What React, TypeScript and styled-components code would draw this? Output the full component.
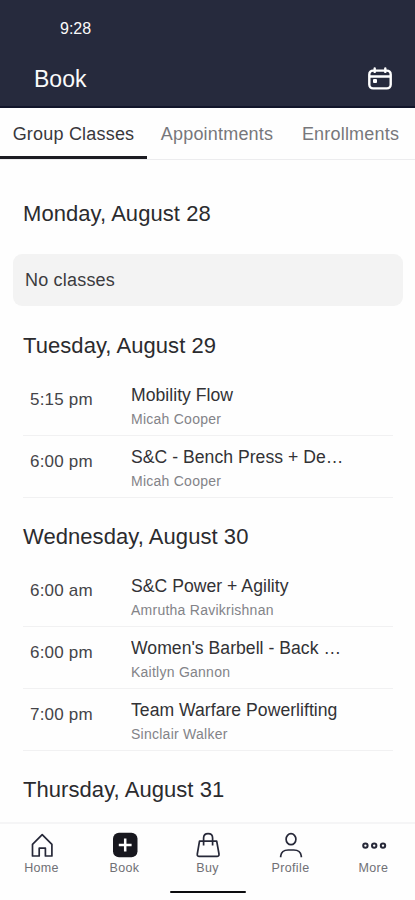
import React from "react";
import styled, { createGlobalStyle } from "styled-components";

const GlobalStyle = createGlobalStyle`
  * { box-sizing: border-box; }
  body {
    margin: 0;
    background: #fefefe;
    color: #27272a;
    font-family: "Liberation Sans", Arial, sans-serif;
  }
`;

const Screen = styled.div`
  width: 415px;
  height: 900px;
  display: flex;
  flex-direction: column;
  overflow: hidden;
  background: #fefefe;
`;

const Header = styled.header`
  flex: none;
  height: 108px;
  background: #262a3d;
  border-bottom: 2px solid #11152a;
  color: #fafafa;
`;

const StatusBar = styled.div`
  height: 56px;
  padding-left: 60px;
  font-size: 16px;
  line-height: 57px;
`;

const TitleBar = styled.div`
  height: 46px;
  padding: 0 23px 0 34px;
  display: flex;
  align-items: center;
  justify-content: space-between;
`;

const Title = styled.h1`
  margin: 0;
  font-size: 23px;
  font-weight: 400;
  line-height: 46px;
`;

const Tabs = styled.nav`
  flex: none;
  height: 52px;
  display: flex;
  border-bottom: 1px solid #ececee;
`;

const Tab = styled.div<{ $active?: boolean; $width: number }>`
  flex: none;
  width: ${(p) => p.$width}px;
  height: 51px;
  text-align: center;
  font-size: 18px;
  line-height: 52px;
  letter-spacing: 0.2px;
  white-space: nowrap;
  color: ${(p) => (p.$active ? "#38383c" : "#77777b")};
  border-bottom: ${(p) => (p.$active ? "3px solid #1c1c22" : "none")};
`;

const Schedule = styled.main`
  flex: 1;
  min-height: 0;
  overflow: hidden;
  padding: 30px 12px 0 13px;
`;

const Day = styled.section<{ $gap: number }>`
  margin-bottom: ${(p) => p.$gap}px;
`;

const DayTitle = styled.h2`
  margin: 0 0 4px 10px;
  font-size: 22px;
  line-height: 48px;
  letter-spacing: 0.06px;
  font-weight: 400;
  color: #2b2b2e;
`;

const EmptyCard = styled.div`
  height: 52px;
  margin-top: 16px;
  padding-left: 12px;
  border-radius: 9px;
  background: #f3f3f3;
  font-size: 18px;
  line-height: 52px;
  letter-spacing: 0.2px;
  color: #3b3b3e;
`;

const ClassRow = styled.div`
  height: 62px;
  margin: 0 10px;
  padding: 8px 0 0 7px;
  display: grid;
  grid-template-columns: 101px 214px;
  border-bottom: 1px solid #f1f1f2;
`;

const Time = styled.div`
  padding-top: 6px;
  font-size: 17px;
  line-height: 24px;
  letter-spacing: 0.2px;
  color: #444448;
`;

const ClassName = styled.div`
  height: 27px;
  overflow: hidden;
  white-space: nowrap;
  font-size: 17.6px;
  line-height: 26px;
  letter-spacing: 0.03px;
  color: #323235;
`;

const Coach = styled.div`
  font-size: 14px;
  line-height: 21px;
  letter-spacing: 0.25px;
  color: #838388;
`;

const BottomBar = styled.footer`
  flex: none;
  height: 78px;
  border-top: 2px solid #f5f5f6;
  display: flex;
  flex-direction: column;
  align-items: center;
`;

const NavItems = styled.div`
  width: 100%;
  height: 67px;
  display: grid;
  grid-template-columns: repeat(5, 1fr);
`;

const NavItem = styled.div`
  display: flex;
  flex-direction: column;
  align-items: center;
  padding-top: 8px;
`;

const NavLabel = styled.div`
  font-size: 12.5px;
  line-height: 20px;
  letter-spacing: 0.35px;
  color: #707075;
`;

const HomeIndicator = styled.div`
  width: 76px;
  height: 2px;
  border-radius: 1px;
  background: #0c0c0e;
`;

const Icon = styled.svg`
  display: block;
  flex: none;
  fill: none;
  stroke: #262838;
  stroke-width: 1.7;
  stroke-linejoin: round;
`;

const CalendarIcon = () => (
  <Icon width="24" height="24" viewBox="0 0 24 24">
    <g stroke="#fff" strokeWidth="2.4" strokeLinecap="round">
      <rect x="1.3" y="3.6" width="21.4" height="17.8" rx="3.8" />
      <path d="M6.7 1.5v3.4M17.3 1.5v3.4M2 9.5h20" />
    </g>
    <rect x="5" y="12" width="4" height="4" rx="1" fill="#fff" stroke="none" />
  </Icon>
);

const HomeIcon = () => (
  <Icon width="26" height="26" viewBox="0 0 26 26">
    <path d="M3.5 24V12.400L13.200 2.600 22.900 12.400V24H16.400V16.200H10.200V24Z" />
  </Icon>
);

const BookIcon = () => (
  <Icon width="26" height="26" viewBox="0 0 26 26">
    <rect x="1" y="0.7" width="24.5" height="24.5" rx="6" fill="#17171e" stroke="none" />
    <path d="M13.2 6.600v12.800M6.800 13h12.800" stroke="#fff" strokeWidth="2.5" />
  </Icon>
);

const BuyIcon = () => (
  <Icon width="26" height="26" viewBox="0 0 26 26">
    <path d="M4.500 9.200h17.200L24 22q.2 2.400-2 2.400H4.200Q2 24.400 2.300 22Z" />
    <path d="M8.600 13.500V6q0-4.300 4.500-4.300T17.600 6v7.500" />
  </Icon>
);

const ProfileIcon = () => (
  <Icon width="26" height="26" viewBox="0 0 26 26">
    <ellipse cx="13" cy="7.2" rx="4.9" ry="5.5" />
    <path d="M2.700 25.300v-1.300q.8-6 7.500-6h5.600q6.700 0 7.500 6v1.300" />
  </Icon>
);

const MoreIcon = () => (
  <Icon width="26" height="26" viewBox="0 0 26 26">
    <g strokeWidth="2">
      <circle cx="4.4" cy="13.6" r="2.2" />
      <circle cx="13.2" cy="13.6" r="2.2" />
      <circle cx="22" cy="13.6" r="2.2" />
    </g>
  </Icon>
);

type Session = { time: string; name: string; coach: string };

const days: { title: string; gap: number; sessions: Session[] }[] = [
  { title: "Monday, August 28", gap: 16, sessions: [] },
  {
    title: "Tuesday, August 29",
    gap: 15,
    sessions: [
      { time: "5:15 pm", name: "Mobility Flow", coach: "Micah Cooper" },
      { time: "6:00 pm", name: "S&C - Bench Press + De…", coach: "Micah Cooper" },
    ],
  },
  {
    title: "Wednesday, August 30",
    gap: 15,
    sessions: [
      { time: "6:00 am", name: "S&C Power + Agility", coach: "Amrutha Ravikrishnan" },
      { time: "6:00 pm", name: "Women's Barbell - Back …", coach: "Kaitlyn Gannon" },
      { time: "7:00 pm", name: "Team Warfare Powerlifting", coach: "Sinclair Walker" },
    ],
  },
];

const navigation = [
  { label: "Home", Glyph: HomeIcon },
  { label: "Book", Glyph: BookIcon },
  { label: "Buy", Glyph: BuyIcon },
  { label: "Profile", Glyph: ProfileIcon },
  { label: "More", Glyph: MoreIcon },
];

export default function App() {
  return (
    <>
      <GlobalStyle />
      <Screen>
        <Header>
          <StatusBar>9:28</StatusBar>
          <TitleBar>
            <Title>Book</Title>
            <CalendarIcon />
          </TitleBar>
        </Header>
        <Tabs>
          <Tab $active $width={147}>Group Classes</Tab>
          <Tab $width={140}>Appointments</Tab>
          <Tab $width={127}>Enrollments</Tab>
        </Tabs>
        <Schedule>
          {days.map((day) => (
            <Day key={day.title} $gap={day.gap}>
              <DayTitle>{day.title}</DayTitle>
              {day.sessions.length === 0 && <EmptyCard>No classes</EmptyCard>}
              {day.sessions.map((s) => (
                <ClassRow key={s.time}>
                  <Time>{s.time}</Time>
                  <div>
                    <ClassName>{s.name}</ClassName>
                    <Coach>{s.coach}</Coach>
                  </div>
                </ClassRow>
              ))}
            </Day>
          ))}
          <DayTitle>Thursday, August 31</DayTitle>
        </Schedule>
        <BottomBar>
          <NavItems>
            {navigation.map(({ label, Glyph }) => (
              <NavItem key={label}>
                <Glyph />
                <NavLabel>{label}</NavLabel>
              </NavItem>
            ))}
          </NavItems>
          <HomeIndicator />
        </BottomBar>
      </Screen>
    </>
  );
}
